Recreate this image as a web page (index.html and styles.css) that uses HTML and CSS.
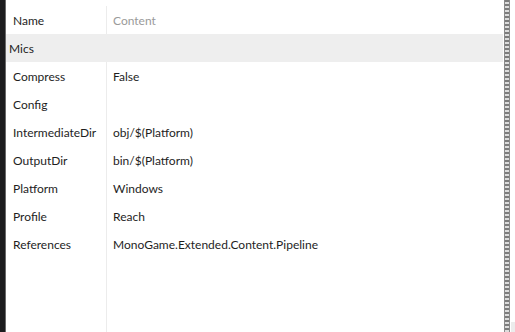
FILE: index.html
```html
<!DOCTYPE html>
<html lang="en">
<head>
    <meta charset="UTF-8">
    <title>Properties</title>
    <link rel="stylesheet" href="styles.css">
</head>
<body>
    <div class="window">
        <div class="edge"></div>
        <div class="grid">
            <div class="row">
                <div class="key">Name</div>
                <div class="val muted">Content</div>
            </div>
            <div class="group">Mics</div>
            <div class="row"><div class="key">Compress</div><div class="val">False</div></div>
            <div class="row"><div class="key">Config</div><div class="val"></div></div>
            <div class="row"><div class="key">IntermediateDir</div><div class="val">obj/$(Platform)</div></div>
            <div class="row"><div class="key">OutputDir</div><div class="val">bin/$(Platform)</div></div>
            <div class="row"><div class="key">Platform</div><div class="val">Windows</div></div>
            <div class="row"><div class="key">Profile</div><div class="val">Reach</div></div>
            <div class="row"><div class="key">References</div><div class="val">MonoGame.Extended.Content.Pipeline</div></div>
            <div class="row filler"><div class="key"></div><div class="val"></div></div>
        </div>
        <div class="splitter"></div>
        <div class="side">
            <div class="corner"></div>
        </div>
    </div>
</body>
</html>
```
FILE: styles.css
```css
html, body {
    margin: 0;
    height: 100%;
}
body {
    font-family: Lato, "Open Sans", sans-serif;
    font-size: 12px;
    color: #1e1e1e;
    background: #fff;
}
.window {
    display: flex;
    height: 332px;
}
.edge {
    width: 5px;
    background: #1c1c1e;
    border-right: 1px solid #6a6a6a;
}
.grid {
    width: 497px;
    display: flex;
    flex-direction: column;
    padding-top: 6px;
}
.row {
    display: flex;
    height: 28px;
    line-height: 29px;
}
.key {
    width: 93px;
    padding-left: 7px;
    border-right: 1px solid #ececec;
    white-space: nowrap;
    overflow: hidden;
}
.val {
    padding-left: 6px;
    white-space: nowrap;
}
.muted {
    color: #9a9a9a;
}
.group {
    height: 28px;
    line-height: 29px;
    background: #eeeeee;
    padding-left: 3px;
}
.filler {
    flex: 1;
}
.splitter {
    width: 6px;
    background: repeating-linear-gradient(#7c7c7c 0 2px, #dcdcdc 2px 4px);
    border-left: 1px solid #8a8a8a;
    border-right: 1px solid #8a8a8a;
    box-sizing: border-box;
    margin-left: 1px;
}
.side {
    flex: 1;
    background: #fff;
    display: flex;
    flex-direction: column;
    justify-content: flex-end;
}
.corner {
    height: 10px;
    margin-left: 1px;
    background: #ececec;
}
```
